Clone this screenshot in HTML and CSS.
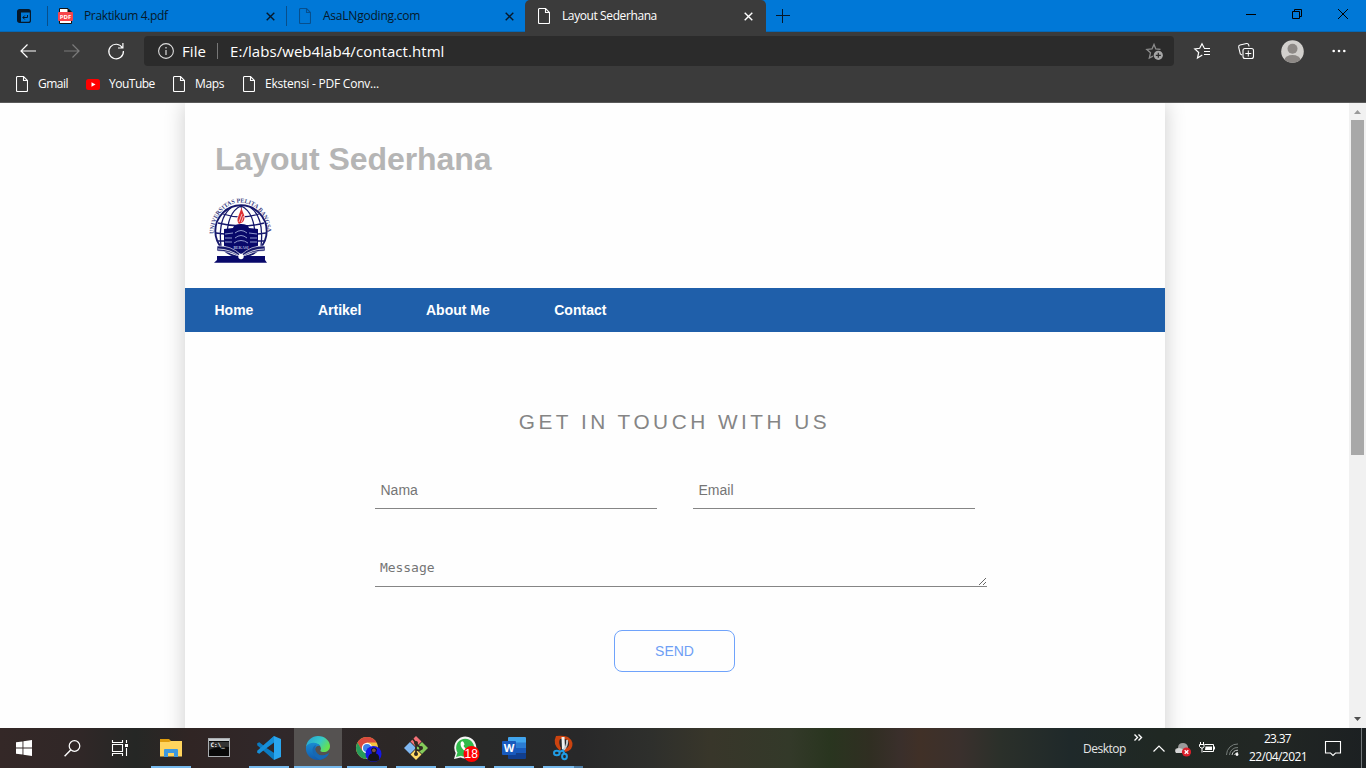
FILE: index.html
```
<!DOCTYPE html>
<html lang="id">
<head>
<meta charset="utf-8">
<title>Layout Sederhana</title>
<link rel="stylesheet" href="styles.css">
</head>
<body>
<svg class="defs" width="0" height="0">
  <symbol id="page" viewBox="0 0 12 16"><path d="M1.500.5h6l4 4v10a1 1 0 0 1-1 1h-9a1 1 0 0 1-1-1v-13a1 1 0 0 1 1-1zM7.500.5v4h4" fill="none" stroke="currentColor" stroke-width="1.100"/></symbol>
  <symbol id="close" viewBox="0 0 9 9"><path d="M.7.7l7.600 7.600M8.300.7L.7 8.300" fill="none" stroke="currentColor" stroke-width="1.400"/></symbol>
</svg>

<header class="tabstrip">
  <div class="tab-actions">
    <svg width="14" height="14" viewBox="0 0 14 14"><rect x=".6" y=".6" width="12.800" height="12.800" rx="2" fill="none" stroke="#06182a" stroke-width="1.200"/><path d="M1 1h12v2.500H4V13H1z" fill="#06182a"/><path d="M10.500 6v2.500H6M7.800 6.500l-2 2 2 2" fill="none" stroke="#06182a"/></svg>
  </div>
  <div class="tab first">
    <svg width="15" height="16" viewBox="0 0 15 16"><path d="M1.500 5V.5h8.500l3.500 3.500V15.500h-12V12" fill="#fff" stroke="#111"/><path d="M9.500 0v4.500H14z" fill="#111"/><rect y="4" width="15" height="9" rx="1" fill="#f8434a"/><text x="7.500" y="10.700" class="pdf">PDF</text></svg>
    <span class="label praktikum">Praktikum 4.pdf</span>
    <svg width="9" height="9"><use href="#close"/></svg>
  </div>
  <div class="tab second">
    <svg class="dim" width="12" height="16"><use href="#page"/></svg>
    <span class="label asal">AsaLNgoding.com</span>
    <svg width="9" height="9"><use href="#close"/></svg>
  </div>
  <div class="tab active">
    <svg width="12" height="16"><use href="#page"/></svg>
    <span class="label layout">Layout Sederhana</span>
    <svg width="9" height="9"><use href="#close"/></svg>
  </div>
  <svg class="new-tab" width="14" height="14" viewBox="0 0 14 14"><path d="M6.500 0v14M0 6.500h14" stroke="#06182a"/></svg>
  <div class="window-controls">
    <svg width="10" height="10" viewBox="0 0 10 10"><path d="M0 5.500h10" stroke="#000"/></svg>
    <svg width="10" height="10" viewBox="0 0 10 10"><path d="M.5 2.500h7v7h-7zM2.500 2.500v-2h7v7h-2" fill="none" stroke="#000"/></svg>
    <svg width="10" height="10" viewBox="0 0 10 10"><path d="M0 0l10 10M10 0L0 10" stroke="#000"/></svg>
  </div>
</header>

<nav class="toolbar">
  <svg width="16" height="14" viewBox="0 0 16 14"><path d="M16 7H1M7.500.5L1 7l6.500 6.500" fill="none" stroke="#fff" stroke-width="1.200"/></svg>
  <svg width="16" height="14" viewBox="0 0 16 14"><path d="M0 7h15M8.500.5L15 7l-6.500 6.500" fill="none" stroke="#7b7b7b" stroke-width="1.200"/></svg>
  <svg width="16" height="16" viewBox="0 0 16 16"><path d="M14.500 5A7.300 7.300 0 1 0 15.400 8M14.900 0v5H10" fill="none" stroke="#fff" stroke-width="1.200"/></svg>
  <div class="address">
    <svg width="16" height="16" viewBox="0 0 16 16"><circle cx="8" cy="8" r="7.400" fill="none" stroke="#ddd" stroke-width="1.100"/><path d="M8 7v5M8 4v1.500" stroke="#ddd" stroke-width="1.200"/></svg>
    <span class="scheme">File</span>
    <span class="url">E:/labs/web4lab4/contact.html</span>
    <svg class="star" width="18" height="17" viewBox="0 0 18 17"><path d="M15.500 6.400L10.800 5.900 9 1.500 7 5.900 1.800 6.400 5.500 9.800 4.300 15 8 13.100" fill="none" stroke="#8d8d8d" stroke-width="1.300"/><circle cx="13.300" cy="12.300" r="4.600" fill="#a5a5a5"/><path d="M10.800 12.300h5M13.300 9.800v5" stroke="#2b2b2b" stroke-width="1.200"/></svg>
  </div>
  <div class="tools">
    <svg width="17" height="16" viewBox="0 0 17 16"><path d="M8.300 12L3.500 15l1.200-5.500L.8 5.900l4.900-.6L8 .8l2.200 4.200" fill="none" stroke="#fff" stroke-width="1.200"/><path d="M10 5.500h6M10 8.500h6M10 11.500h6" stroke="#fff" stroke-width="1.200"/></svg>
    <svg width="16" height="16" viewBox="0 0 16 16"><path d="M4 12L2.300 11 .7 4.400Q.3 2.500 2 2l6.500-1.500q1.700-.3 2.200 1.500l.3 1.500" fill="none" stroke="#fff" stroke-width="1.100"/><rect x="5" y="5.500" width="10.500" height="10" rx="2" fill="#3b3b3b" stroke="#fff" stroke-width="1.100"/><path d="M10.300 7.500v6M7.300 10.500h6" stroke="#fff"/></svg>
    <svg class="avatar" width="23" height="23" viewBox="0 0 23 23"><clipPath id="ring"><circle cx="11.500" cy="11.500" r="11.300"/></clipPath><g clip-path="url(#ring)"><rect width="23" height="23" fill="#d2d0cd"/><circle cx="11.500" cy="8.800" r="5" fill="#8d8986"/><ellipse cx="11.500" cy="20" rx="8" ry="5" fill="#8d8986"/></g></svg>
    <svg width="14" height="4" viewBox="0 0 14 4"><g fill="#fff"><circle cx="1.700" cy="2" r="1.300"/><circle cx="7" cy="2" r="1.300"/><circle cx="12.300" cy="2" r="1.300"/></g></svg>
  </div>
</nav>

<div class="bookmarks">
  <a class="bookmark gmail"><svg width="12" height="16"><use href="#page"/></svg><span>Gmail</span></a>
  <a class="bookmark youtube"><svg width="14" height="11" viewBox="0 0 14 11"><rect width="14" height="11" rx="2.500" fill="#f00"/><path d="M5.500 3.200v4.600l4-2.300z" fill="#fff"/></svg><span>YouTube</span></a>
  <a class="bookmark maps"><svg width="12" height="16"><use href="#page"/></svg><span>Maps</span></a>
  <a class="bookmark ext"><svg width="12" height="16"><use href="#page"/></svg><span>Ekstensi - PDF Conv...</span></a>
</div>

<div class="viewport">
  <div class="canvas">
    <main class="container">
      <div class="masthead">
        <h1>Layout Sederhana</h1>
        <svg class="crest" width="66" height="70" viewBox="0 0 66 70">
          <path id="arc" d="M5.500 38A27 31.500 0 0 1 59.500 38" fill="none"/>
          <text class="crest-text"><textPath href="#arc" textLength="90">UNIVERSITAS PELITA BANGSA</textPath></text>
          <g fill="none" stroke="#16186c" stroke-width="1.300">
            <circle cx="33" cy="35" r="25.700" stroke-width="1.900"/>
            <path d="M33 10v30M33 10C21 15 18 30 19 50M33 10C45 15 48 30 47 50M24 11C14 18 11 33 13 50M42 11C52 18 55 33 53 50M15 18q18 6 36 0M10 27q23 6 46 0M8 37q25 4 50 0M10 45h46"/>
          </g>
          <path d="M32 11C37 18 39 23 35 28H30C26 23 32 19 32 11z" fill="#fff"/>
          <path d="M33.500 11C34 17 39 20 35 26L31 28C27 23 32 19 33.500 11z" fill="#dc2e32"/>
          <path d="M31 26l3-8M33.500 26l2-6" stroke="#fff" stroke-width=".7"/>
          <path d="M16 33l9-1q1-4 8-4t8 4l9 1v17l-17 8-17-8z" fill="#08086a"/>
          <path d="M17 38l8-1M17 42h7M17 46h7M41 37l8 1M42 42h7M42 46h7M27 37q6-5 12 0M27 42q6-5 12 0M26 47q7-5 14 0" fill="none" stroke="#8f98cc"/>
          <path d="M9 50q14-1 24 9 10-10 24-9v5q-12 0-21 5l-3 3-3-3Q21 55 9 55z" fill="#16186c" stroke="#fff" stroke-width=".6"/>
          <path d="M10 53q12 0 23 8 11-8 23-8" fill="none" stroke="#fff" stroke-width=".8"/>
          <path d="M9 60h48v4l2 2.800H6L9 64z" fill="#08086a"/>
          <circle cx="33" cy="60.500" r="2.700" fill="#fff"/>
          <text x="33" y="53" class="crest-mini">BEKASI</text>
        </svg>
      </div>
      <nav class="menu"><a>Home</a><a>Artikel</a><a>About Me</a><a>Contact</a></nav>
      <form class="contact">
        <h2>GET IN TOUCH WITH US</h2>
        <div class="fields">
          <input type="text" placeholder="Nama">
          <input type="text" placeholder="Email">
        </div>
        <textarea placeholder="Message"></textarea>
        <button type="button">SEND</button>
      </form>
    </main>
  </div>
  <aside class="scrollbar">
    <svg width="7" height="4" viewBox="0 0 7 4"><path d="M0 4h7L3.500 0z" fill="#999"/></svg>
    <div class="thumb"></div>
    <svg class="down" width="7" height="4" viewBox="0 0 7 4"><path d="M0 0h7L3.500 4z" fill="#505050"/></svg>
  </aside>
</div>

<footer class="taskbar">
  <div class="system">
    <div><svg width="16" height="16" viewBox="0 0 16 16" fill="#fff"><path d="M0 2.300L6.500 1.400V7.500H0zM7.400 1.200L16 0V7.500H7.400zM0 8.400H6.500V14.600L0 13.700zM7.400 8.400H16V16L7.400 14.800z"/></svg></div>
    <div><svg width="17" height="17" viewBox="0 0 17 17"><circle cx="10.500" cy="6" r="5.300" fill="none" stroke="#fff" stroke-width="1.200"/><path d="M6.700 10L.6 16.300" stroke="#fff" stroke-width="1.400"/></svg></div>
    <div><svg width="17" height="16" viewBox="0 0 17 16"><path d="M.5 0v2.500h10V0M.5 4.500h10v7H.5zM.5 16v-2.500h10V16M14.500 0v3M14.500 8v8" fill="none" stroke="#fff" stroke-width="1.100"/><path d="M13 4h3v3h-3z" fill="#fff"/></svg></div>
  </div>
  <div class="apps">
    <div class="app running"><svg width="22" height="18" viewBox="0 0 22 18"><path d="M0 0h9l2 2h10v5H0z" fill="#df9d0e"/><path d="M0 3h9l2-1h11v15.500H0z" fill="#ffd45d"/><path d="M4 18v-7q0-1 1-1h12q1 0 1 1v7h-4v-4H8v4z" fill="#3d98de"/></svg></div>
    <div class="app cmd"><svg width="22" height="19" viewBox="0 0 22 19"><rect x=".5" y=".5" width="21" height="18" fill="#080808" stroke="#a9adb0"/><path d="M1 1h20v2H1z" fill="#c7cbce"/><path d="M1 4h20v5Q10 8 1 12z" fill="#333"/><text x="2.500" y="9" class="prompt">C:\_</text></svg></div>
    <div class="app running"><svg width="24" height="24" viewBox="0 0 24 24"><path d="M17 0L6.500 9.500 2.300 6.200.2 7.300v1.900L17 24l1-6.500L9.500 12 18 6z" fill="#0b7bc1"/><path d="M17 6L2.300 17.800.2 16.700v-2L17 0z" fill="#168fd9"/><path d="M17 0l7 3v18l-7 3z" fill="#29a5ee"/></svg></div>
    <div class="app current"><svg width="24" height="24" viewBox="0 0 24 24"><defs><linearGradient id="eg" x2="1" y2=".5"><stop stop-color="#239fd7"/><stop offset=".6" stop-color="#36c9c7"/><stop offset="1" stop-color="#65e151"/></linearGradient><linearGradient id="eb" x2="0" y2="1"><stop stop-color="#198bd2"/><stop offset="1" stop-color="#125aac"/></linearGradient></defs><path d="M0 11C1 4 6 0 12 0c7 0 12 5 12 10 0 4-3 6-6 6-4 0-4-1-3-3C15 7 6 5 0 11z" fill="url(#eg)"/><path d="M0 11C3 5 12 6 14.500 10 10 9 8 13 10 16c3 5 9 4 13 1-2 5-7 7-11 7C5 24-1 18 0 11z" fill="url(#eb)"/><path d="M10 9C4 11 6 21 14 23.700 18 23 21 21 23 17c-4 3-10 4-13-1-1.500-2-1-5 0-7z" fill="#1768b3"/></svg></div>
    <div class="app running"><svg class="chrome" width="26" height="25" viewBox="0 0 26 25"><circle cx="11" cy="11" r="11" fill="#f4c340"/><path d="M1.500 5.500A11 11 0 0 1 20.600 5.500H11L6 14z" fill="#d94a3e"/><path d="M1.500 5.500A11 11 0 0 0 10 22l5-8.500-9 0z" fill="#279b5b"/><circle cx="11" cy="11" r="5.200" fill="#fff"/><circle cx="11" cy="11" r="4" fill="#3e82e6"/><circle cx="17.500" cy="17" r="8" fill="#1717e8"/><path d="M12 23q0-6 4-6.500l-1-4q1-2 3-2t3 2l-1 4q4 1 3 6.500-5 3-11 0z" fill="#15151b"/><circle cx="17.900" cy="13.300" r="1.900" fill="#785048"/></svg></div>
    <div class="app running"><svg width="24" height="24" viewBox="0 0 24 24"><path d="M12 0l5.500 5.500L12 11 6.500 5.500z" fill="#f37177"/><path d="M6 6l6 6-6 6-6-6z" fill="#80b8f2"/><path d="M18 6l6 6-6 6-6-6z" fill="#85cb5a"/><path d="M12 13l5.500 5.500L12 24l-5.500-5.500z" fill="#ffdc67"/><path d="M8 2l4 5v11M12 8l5 4M12 14q4 1 5-1" stroke="#302922" stroke-width="1.700" fill="none"/><g fill="#302922"><circle cx="12" cy="7" r="2"/><circle cx="17" cy="12" r="2"/><circle cx="12" cy="18" r="2"/></g></svg></div>
    <div class="app running"><svg class="whatsapp" width="26" height="26" viewBox="0 0 26 26"><path d="M0 22l1.700-6A11 11 0 1 1 6.500 20.500z" fill="#f5f5f5"/><path d="M2 20l1.500-4.500A9 9 0 1 1 7 18.700z" fill="#30ba4b"/><path d="M7 5q2-2 3 1l.5 1.500-1 1.500q1 2 3.500 3l1.500-1.500 3 1.500q0 3-3 3C10 15 5 9 7 5z" fill="#fff"/><circle cx="17.500" cy="17" r="8" fill="#f00"/><text x="17.300" y="21.300" class="badge">18</text></svg></div>
    <div class="app running"><svg width="24" height="22" viewBox="0 0 24 22"><path d="M7 0h16q1 0 1 1v5H6V1q0-1 1-1z" fill="#41a5ee"/><path d="M6 5.500h18V11H6z" fill="#2b7cd3"/><path d="M6 11h18v5.500H6z" fill="#185abd"/><path d="M6 16.500h18V21q0 1-1 1H7q-1 0-1-1z" fill="#103f91"/><rect y="4" width="14" height="14" rx="1" fill="#185abd"/><text x="7" y="15" class="word">W</text></svg></div>
    <div class="app running stacked"><svg width="21" height="24" viewBox="0 0 21 24"><path d="M3 0Q10-1 15 1q7 5 3 12-3 3-6 3l-1-3q5-1 5-5 0-5-6-5H7q-2 4 1 9l-1 3Q-1 8 3 0z" fill="#cb430f"/><path d="M10 1l.5 12" stroke="#edf0f1" stroke-width="3"/><path d="M14 4q1 6-4.500 11" fill="none" stroke="#c5cbcf" stroke-width="2"/><g fill="none" stroke="#219ce4" stroke-width="2"><ellipse cx="3.800" cy="17" rx="2.800" ry="2.300"/><ellipse cx="11.500" cy="20.500" rx="2.400" ry="2.700"/><path d="M6 16l4-1.500 1.500 3.500"/></g></svg></div>
  </div>
  <div class="tray">
    <span class="desktop">Desktop</span>
    <svg class="more" width="8" height="7" viewBox="0 0 8 7"><path d="M.5.5l3 3-3 3M4.500.5l3 3-3 3" fill="none" stroke="#fff" stroke-width="1.400"/></svg>
    <svg class="chevron" width="12" height="7" viewBox="0 0 12 7"><path d="M.5 6.500L6 1l5.500 5.500" fill="none" stroke="#fff" stroke-width="1.200"/></svg>
    <svg class="cloud" width="16" height="14" viewBox="0 0 16 14"><path d="M3 10Q0 10 0 7.500 0 5 3 5q0-5 5-5 4 0 5 4v5z" fill="#9b9b9b"/><path d="M1 10q-2-4 3-5 3 0 6 3v2z" fill="#d5d5d5"/><circle cx="11.500" cy="9" r="4.600" fill="#db202b"/><path d="M9.700 7.200l3.600 3.600M13.300 7.200L9.700 10.800" stroke="#fff" stroke-width="1.300"/></svg>
    <svg class="battery" width="16" height="12" viewBox="0 0 16 12"><path d="M5.500 2.500h9v7H4M15.500 4.500v3M1.500 0v2M4.500 0v2M.5 2.500h4.500v2L4 6H2L.5 4.500zM3 6v4.500" fill="none" stroke="#fff"/><path d="M6.500 4.500H13v3.500H6z" fill="#fff"/></svg>
    <svg class="wifi" width="13" height="13" viewBox="0 0 13 13"><path d="M.5 12A11 11 0 0 1 12 1M3.500 12A8 8 0 0 1 12 4.500" fill="none" stroke="#777e7b"/><path d="M6 12a6 6 0 0 1 6-4.800M8.500 12A4 4 0 0 1 12 9.500" fill="none" stroke="#c5c8c7"/><circle cx="11" cy="11.500" r="1.400" fill="#fff"/></svg>
    <div class="clock"><span class="time">23.37</span><span class="date">22/04/2021</span></div>
    <svg class="notice" width="16" height="16" viewBox="0 0 16 16"><path d="M.5.5h15v11.500h-5L8 14.500 5.500 12h-5z" fill="none" stroke="#fff" stroke-width="1.100"/></svg>
    <div class="peek"></div>
  </div>
</footer>
</body>
</html>
```
FILE: styles.css
```
* { box-sizing: border-box; }
body {
  margin: 0;
  width: 1366px;
  height: 768px;
  overflow: hidden;
  display: flex;
  flex-direction: column;
  font-family: "Open Sans", "Noto Sans", sans-serif;
  font-size: 12px;
  background: #fff;
}
svg { display: block; flex: none; overflow: visible; }
.defs { position: absolute; }
span { white-space: nowrap; }

/* Browser chrome */
.tabstrip { height: 32px; flex: none; display: flex; background: #0078d7; color: #06182a; box-shadow: inset 0 -1px #0668b5; }
.tab-actions { width: 47px; padding: 9px 0 0 17px; }
.tab { display: flex; align-items: center; position: relative; }
.tab .label { flex: 1; line-height: 30px; }
.tab.first { width: 239px; padding: 0 11px 0 11px; }
.tab.second { width: 239px; padding: 0 11px 0 13px; }
.tab.first::before, .tab.second::before { content: ""; position: absolute; left: 0; top: 6px; width: 1px; height: 20px; background: #084f8b; }
.tab.active { width: 241px; padding: 0 13px 0 13px; background: #3b3b3b; color: #fff; border-radius: 5px 5px 0 0; }
.first .label { margin-left: 11px; }
.second .label { margin-left: 12px; }
.active .label { margin-left: 12px; }
.praktikum { letter-spacing: -0.36px; }
.asal { letter-spacing: -0.22px; }
.layout { letter-spacing: -0.4px; }
.dim { color: #074f8d; }
.new-tab { margin: 9px 0 0 10px; }
.window-controls { margin-left: auto; display: flex; gap: 36px; padding: 9px 18px 0 0; }
.pdf { font: bold 6px "Open Sans", sans-serif; fill: #fff; text-anchor: middle; }

.toolbar { height: 38px; flex: none; display: flex; align-items: center; gap: 28px; padding-left: 20px; background: #3b3b3b; }
.address { width: 1030px; height: 30px; margin: 0 -8px; padding: 0 11px 0 14px; display: flex; align-items: center; flex: none; border-radius: 4px; background: #2b2b2b; color: #fff; font-size: 15px; }
.scheme { width: 36px; height: 16px; margin-left: 8px; line-height: 16px; border-right: 1px solid #777; letter-spacing: 0.1px; }
.url { margin-left: 12px; letter-spacing: 0.06px; line-height: 20px; }
.star { margin-left: auto; }
.tools { display: flex; align-items: center; gap: 27px; }
.avatar { margin: 0 1px 0 0; }

.bookmarks { height: 33px; flex: none; display: flex; background: #3b3b3b; border-bottom: 1px solid #5a5a5a; color: #fff; padding: 0 0 4px 16px; align-items: center; }
.bookmark { display: flex; align-items: center; gap: 10px; }
.bookmark span { margin-top: -1px; }
.gmail { width: 70px; letter-spacing: -0.5px; }
.youtube { width: 87px; letter-spacing: -0.5px; gap: 9px; }
.maps { width: 70px; letter-spacing: -0.35px; }
.ext { letter-spacing: -0.22px; }

/* Web page */
.viewport { flex: 1; min-height: 0; display: flex; }
.canvas { width: 1349px; overflow: hidden; display: flex; justify-content: center; background: #fefefe; }
.container { width: 980px; height: 900px; flex: none; background: #fefefe; box-shadow: 0 0 20px rgba(0, 0, 0, .2); margin-left: 1px; font-family: "Liberation Sans", Arial, sans-serif; }
.masthead { height: 185px; padding: 38px 0 0 30px; }
h1 { margin: 0; font-size: 32px; line-height: 37px; letter-spacing: -0.05px; color: #b5b5b5; }
.crest { margin: 18px 0 0 -7px; }
.crest-text { font: bold 6px "Liberation Serif", serif; fill: #3b3e82; }
.crest-mini { font: bold 4px "Liberation Serif", serif; fill: #aeb5dc; text-anchor: middle; }
.menu { height: 44px; display: flex; gap: 64.5px; padding-left: 29.5px; background: #1f5faa; color: #fff; font-size: 14px; font-weight: bold; line-height: 44px; }
.contact { width: 600px; margin: 78px 0 0 190px; display: flex; flex-direction: column; }
h2 { margin: 0 0 0 -1px; font-size: 20.8px; line-height: 24px; letter-spacing: 3.5px; font-weight: normal; color: #858585; text-align: center; }
.fields { display: flex; justify-content: space-between; margin-top: 38px; }
input, textarea { border: 0; border-bottom: 1px solid #858585; padding: 5px; outline: 0; background: transparent; }
input { width: 282px; height: 37px; padding: 4px 5px; font: 14px "Liberation Sans", Arial, sans-serif; text-indent: 0.5px; }
textarea { width: 612px; height: 31px; margin-top: 47px; padding-top: 4px; font: 13px/15px "DejaVu Sans Mono", monospace; letter-spacing: -0.05px; overflow: hidden; resize: both; }
::placeholder { color: #757575; opacity: 1; }
button { width: 121px; height: 42px; margin: 43px 0 0 239px; border: 1px solid #6fa3fb; border-radius: 8px; background: transparent; color: #6f9ff5; font: 14px "Liberation Sans", Arial, sans-serif; }
.scrollbar { width: 17px; background: #f1f1f1; display: flex; flex-direction: column; align-items: center; padding: 7px 0 7px; }
.thumb { width: 13px; height: 335px; margin-top: 6px; background: #a8a8a8; }
.down { margin-top: auto; }

/* Taskbar */
.taskbar { height: 40px; flex: none; display: flex; color: #fff; background: linear-gradient(90deg, #342827 0, #302727 80px, #252725 135px, #302524 190px, #30282a 285px, #2c2726 390px, #292a29 480px, #282829 580px, #2e2f2c 650px, #38362a 710px, #333929 790px, #29351f 830px, #302e22 870px, #3a2f2b 900px, #403027 920px, #3a302d 960px, #2b302a 1000px, #1f292a 1070px, #202823 1160px, #222724 1260px, #1c2022 1366px); }
.system { display: flex; }
.system > div { width: 48px; display: flex; align-items: center; justify-content: center; }
.apps { display: flex; gap: 1px; padding-left: 3px; }
.app { width: 48px; height: 40px; display: flex; align-items: center; justify-content: center; position: relative; }
.running::after, .current::after { content: ""; position: absolute; bottom: 0; left: 4px; width: 40px; height: 2px; background: #76b9ed; }
.current { background: #555251; }
.current::after { left: 0; width: 48px; }
.stacked::after { background: linear-gradient(90deg, #76b9ed 31px, #4d7da5 31px); }
.cmd svg { margin: 0 2px 1px 0; }
.chrome { margin: 3px 0 0 3px; }
.whatsapp { margin: 4px 0 0 3px; }
.prompt { font: bold 6px "DejaVu Sans Mono", monospace; fill: #fff; }
.badge { font: 12px "Liberation Sans", Arial, sans-serif; fill: #fff; text-anchor: middle; }
.word { font: bold 11px "Open Sans", sans-serif; fill: #fff; text-anchor: middle; }
.tray { flex: 1; display: flex; align-items: center; justify-content: flex-end; }
.desktop { width: 43px; margin-right: 8px; letter-spacing: -0.5px; color: #e5e5e5; }
.more { margin: 0 11px 22px 0; }
.chevron { margin-right: 10px; }
.cloud { margin: 3px 8px 0 0; }
.battery { margin-right: 11px; }
.wifi { margin: 2px 10px 0 0; }
.clock { width: 58px; display: flex; flex-direction: column; align-items: center; line-height: 18px; margin-top: -1px; }
.time { letter-spacing: -0.7px; margin-right: 1px; }
.date { letter-spacing: -0.55px; }
.notice { margin: 1px 20px 0 18px; }
.peek { width: 5px; height: 40px; border-left: 1px solid #72777a; }
```
